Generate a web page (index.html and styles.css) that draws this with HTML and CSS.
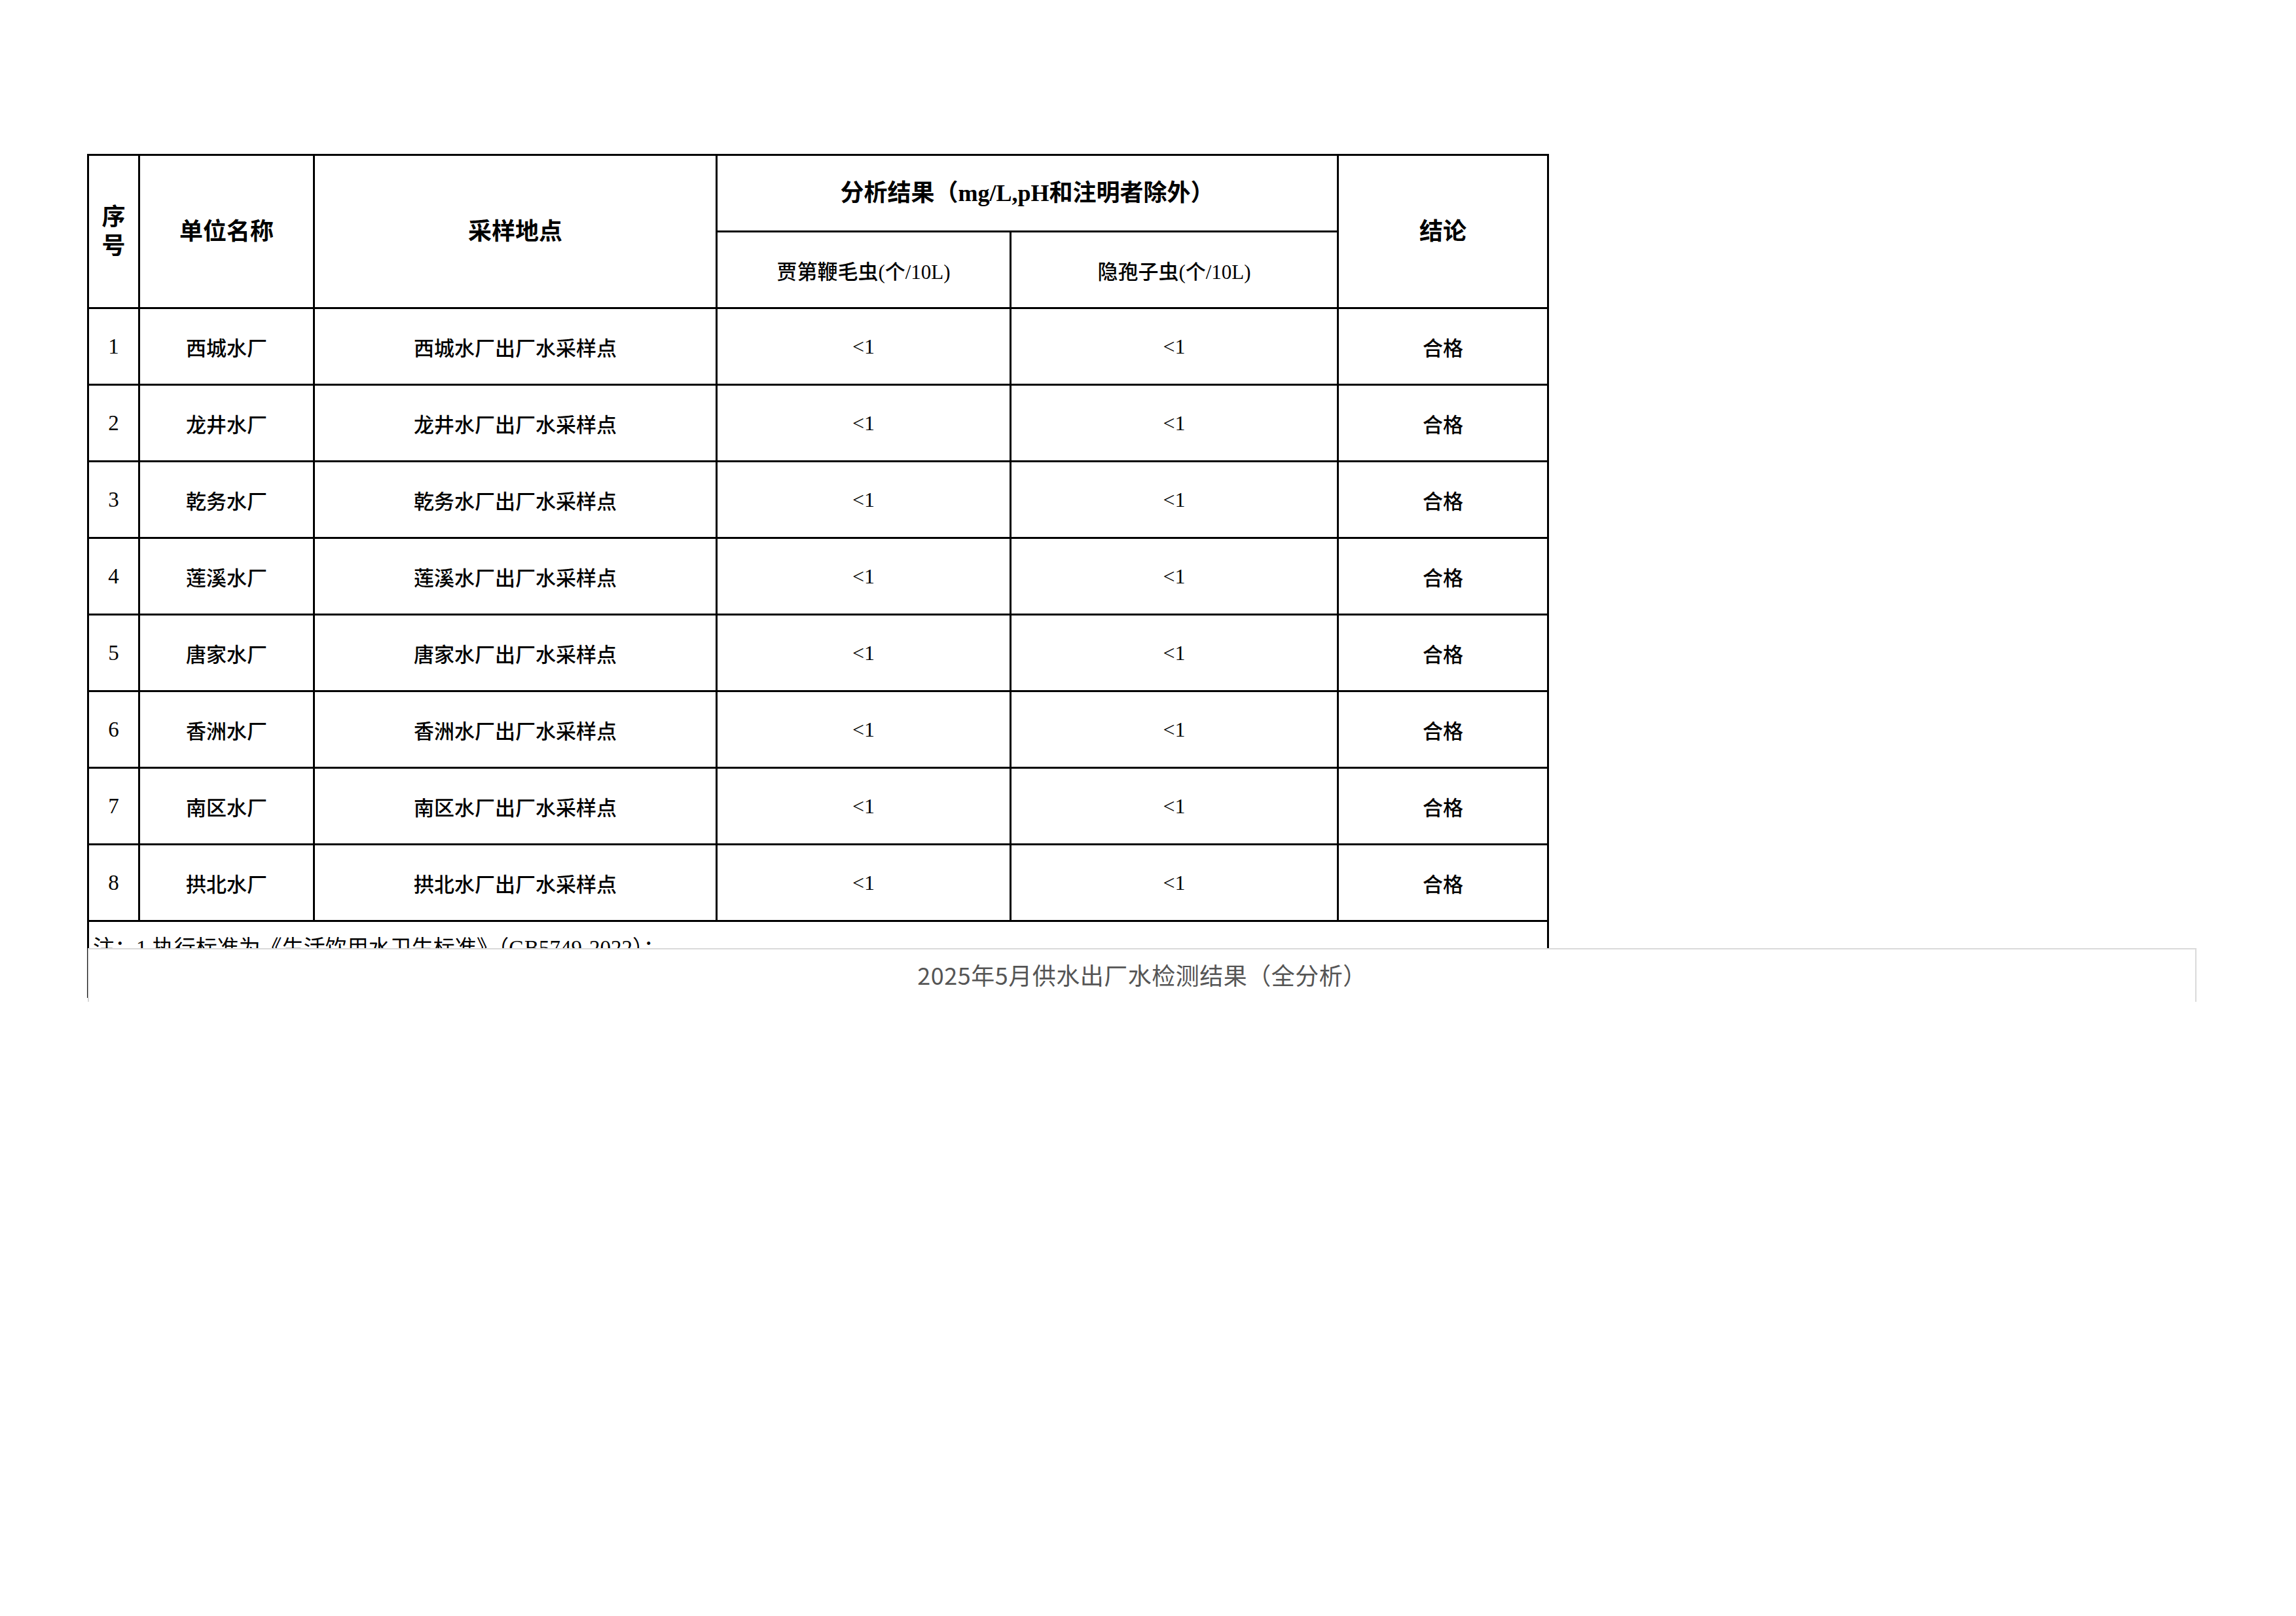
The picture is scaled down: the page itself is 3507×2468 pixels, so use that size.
FILE: index.html
```html
<!DOCTYPE html>
<html lang="zh-CN">
<head>
<meta charset="utf-8">
<title>2025年5月供水出厂水检测结果（全分析）</title>
<link rel="stylesheet" href="styles.css">
</head>
<body>
<div class="page">
  <table class="report">
    <colgroup>
      <col class="c-no">
      <col class="c-unit">
      <col class="c-site">
      <col class="c-giardia">
      <col class="c-crypto">
      <col class="c-result">
    </colgroup>
    <thead>
      <tr class="row">
        <th rowspan="2" class="head"><span class="stack">序号</span></th>
        <th rowspan="2" class="head">单位名称</th>
        <th rowspan="2" class="head">采样地点</th>
        <th colspan="2" class="head">分析结果（mg/L,pH和注明者除外）</th>
        <th rowspan="2" class="head">结论</th>
      </tr>
      <tr class="row">
        <th class="sub">贾第鞭毛虫(个/10L)</th>
        <th class="sub">隐孢子虫(个/10L)</th>
      </tr>
    </thead>
    <tbody>
      <tr class="row"><td class="num">1</td><td class="cjk">西城水厂</td><td class="cjk">西城水厂出厂水采样点</td><td class="val">&lt;1</td><td class="val">&lt;1</td><td class="cjk">合格</td></tr>
      <tr class="row"><td class="num">2</td><td class="cjk">龙井水厂</td><td class="cjk">龙井水厂出厂水采样点</td><td class="val">&lt;1</td><td class="val">&lt;1</td><td class="cjk">合格</td></tr>
      <tr class="row"><td class="num">3</td><td class="cjk">乾务水厂</td><td class="cjk">乾务水厂出厂水采样点</td><td class="val">&lt;1</td><td class="val">&lt;1</td><td class="cjk">合格</td></tr>
      <tr class="row"><td class="num">4</td><td class="cjk">莲溪水厂</td><td class="cjk">莲溪水厂出厂水采样点</td><td class="val">&lt;1</td><td class="val">&lt;1</td><td class="cjk">合格</td></tr>
      <tr class="row"><td class="num">5</td><td class="cjk">唐家水厂</td><td class="cjk">唐家水厂出厂水采样点</td><td class="val">&lt;1</td><td class="val">&lt;1</td><td class="cjk">合格</td></tr>
      <tr class="row"><td class="num">6</td><td class="cjk">香洲水厂</td><td class="cjk">香洲水厂出厂水采样点</td><td class="val">&lt;1</td><td class="val">&lt;1</td><td class="cjk">合格</td></tr>
      <tr class="row"><td class="num">7</td><td class="cjk">南区水厂</td><td class="cjk">南区水厂出厂水采样点</td><td class="val">&lt;1</td><td class="val">&lt;1</td><td class="cjk">合格</td></tr>
      <tr class="row"><td class="num">8</td><td class="cjk">拱北水厂</td><td class="cjk">拱北水厂出厂水采样点</td><td class="val">&lt;1</td><td class="val">&lt;1</td><td class="cjk">合格</td></tr>
      <tr class="note-row"><td colspan="6" class="note">注：1.执行标准为《生活饮用水卫生标准》（GB5749-2022）；</td></tr>
    </tbody>
  </table>
  <div class="title-bar">2025年5月供水出厂水检测结果（全分析）</div>
</div>
</body>
</html>
```

FILE: styles.css
```css
html, body {
  margin: 0;
  padding: 0;
  background: #ffffff;
}

.page {
  position: relative;
  width: 3507px;
  height: 2468px;
  padding: 235px 0 0 133px;
  box-sizing: border-box;
  font-family: "Liberation Serif", "Noto Sans CJK SC", serif;
  color: #000;
}

.report {
  border-collapse: collapse;
  table-layout: fixed;
  width: 2230px;
}

.c-no { width: 78px; }
.c-unit { width: 267px; }
.c-site { width: 615px; }
.c-giardia { width: 449px; }
.c-crypto { width: 500px; }
.c-result { width: 321px; }

.report th,
.report td {
  border: 3px solid #000;
  padding: 0;
  text-align: center;
  vertical-align: middle;
}

.row {
  height: 117px;
}

.head {
  font-size: 36px;
  font-weight: 700;
  line-height: 44px;
}

.stack {
  display: inline-block;
  width: 40px;
  line-height: 44px;
  word-break: break-all;
}

.sub {
  font-size: 31px;
  font-weight: 500;
}

.num {
  font-size: 33px;
  font-weight: 400;
}

.cjk {
  font-size: 31px;
  font-weight: 500;
}

.val {
  font-size: 32px;
  font-weight: 400;
  padding-top: 6px;
}

.note-row {
  height: 117px;
}

.report .note {
  text-align: left;
  vertical-align: top;
  font-size: 33px;
  font-weight: 400;
  line-height: 40px;
  padding: 20px 0 0 6px;
  border-bottom: none;
}

.title-bar {
  position: absolute;
  left: 134px;
  top: 1448px;
  width: 3221px;
  height: 82px;
  box-sizing: border-box;
  border-top: 2px solid #dadada;
  border-left: 2px solid #dadada;
  border-right: 2px solid #dadada;
  background: #ffffff;
  padding-top: 12px;
  text-align: center;
  font-family: "Noto Sans CJK SC", sans-serif;
  font-size: 36px;
  letter-spacing: 0.5px;
  line-height: 52px;
  color: #555555;
}
```
